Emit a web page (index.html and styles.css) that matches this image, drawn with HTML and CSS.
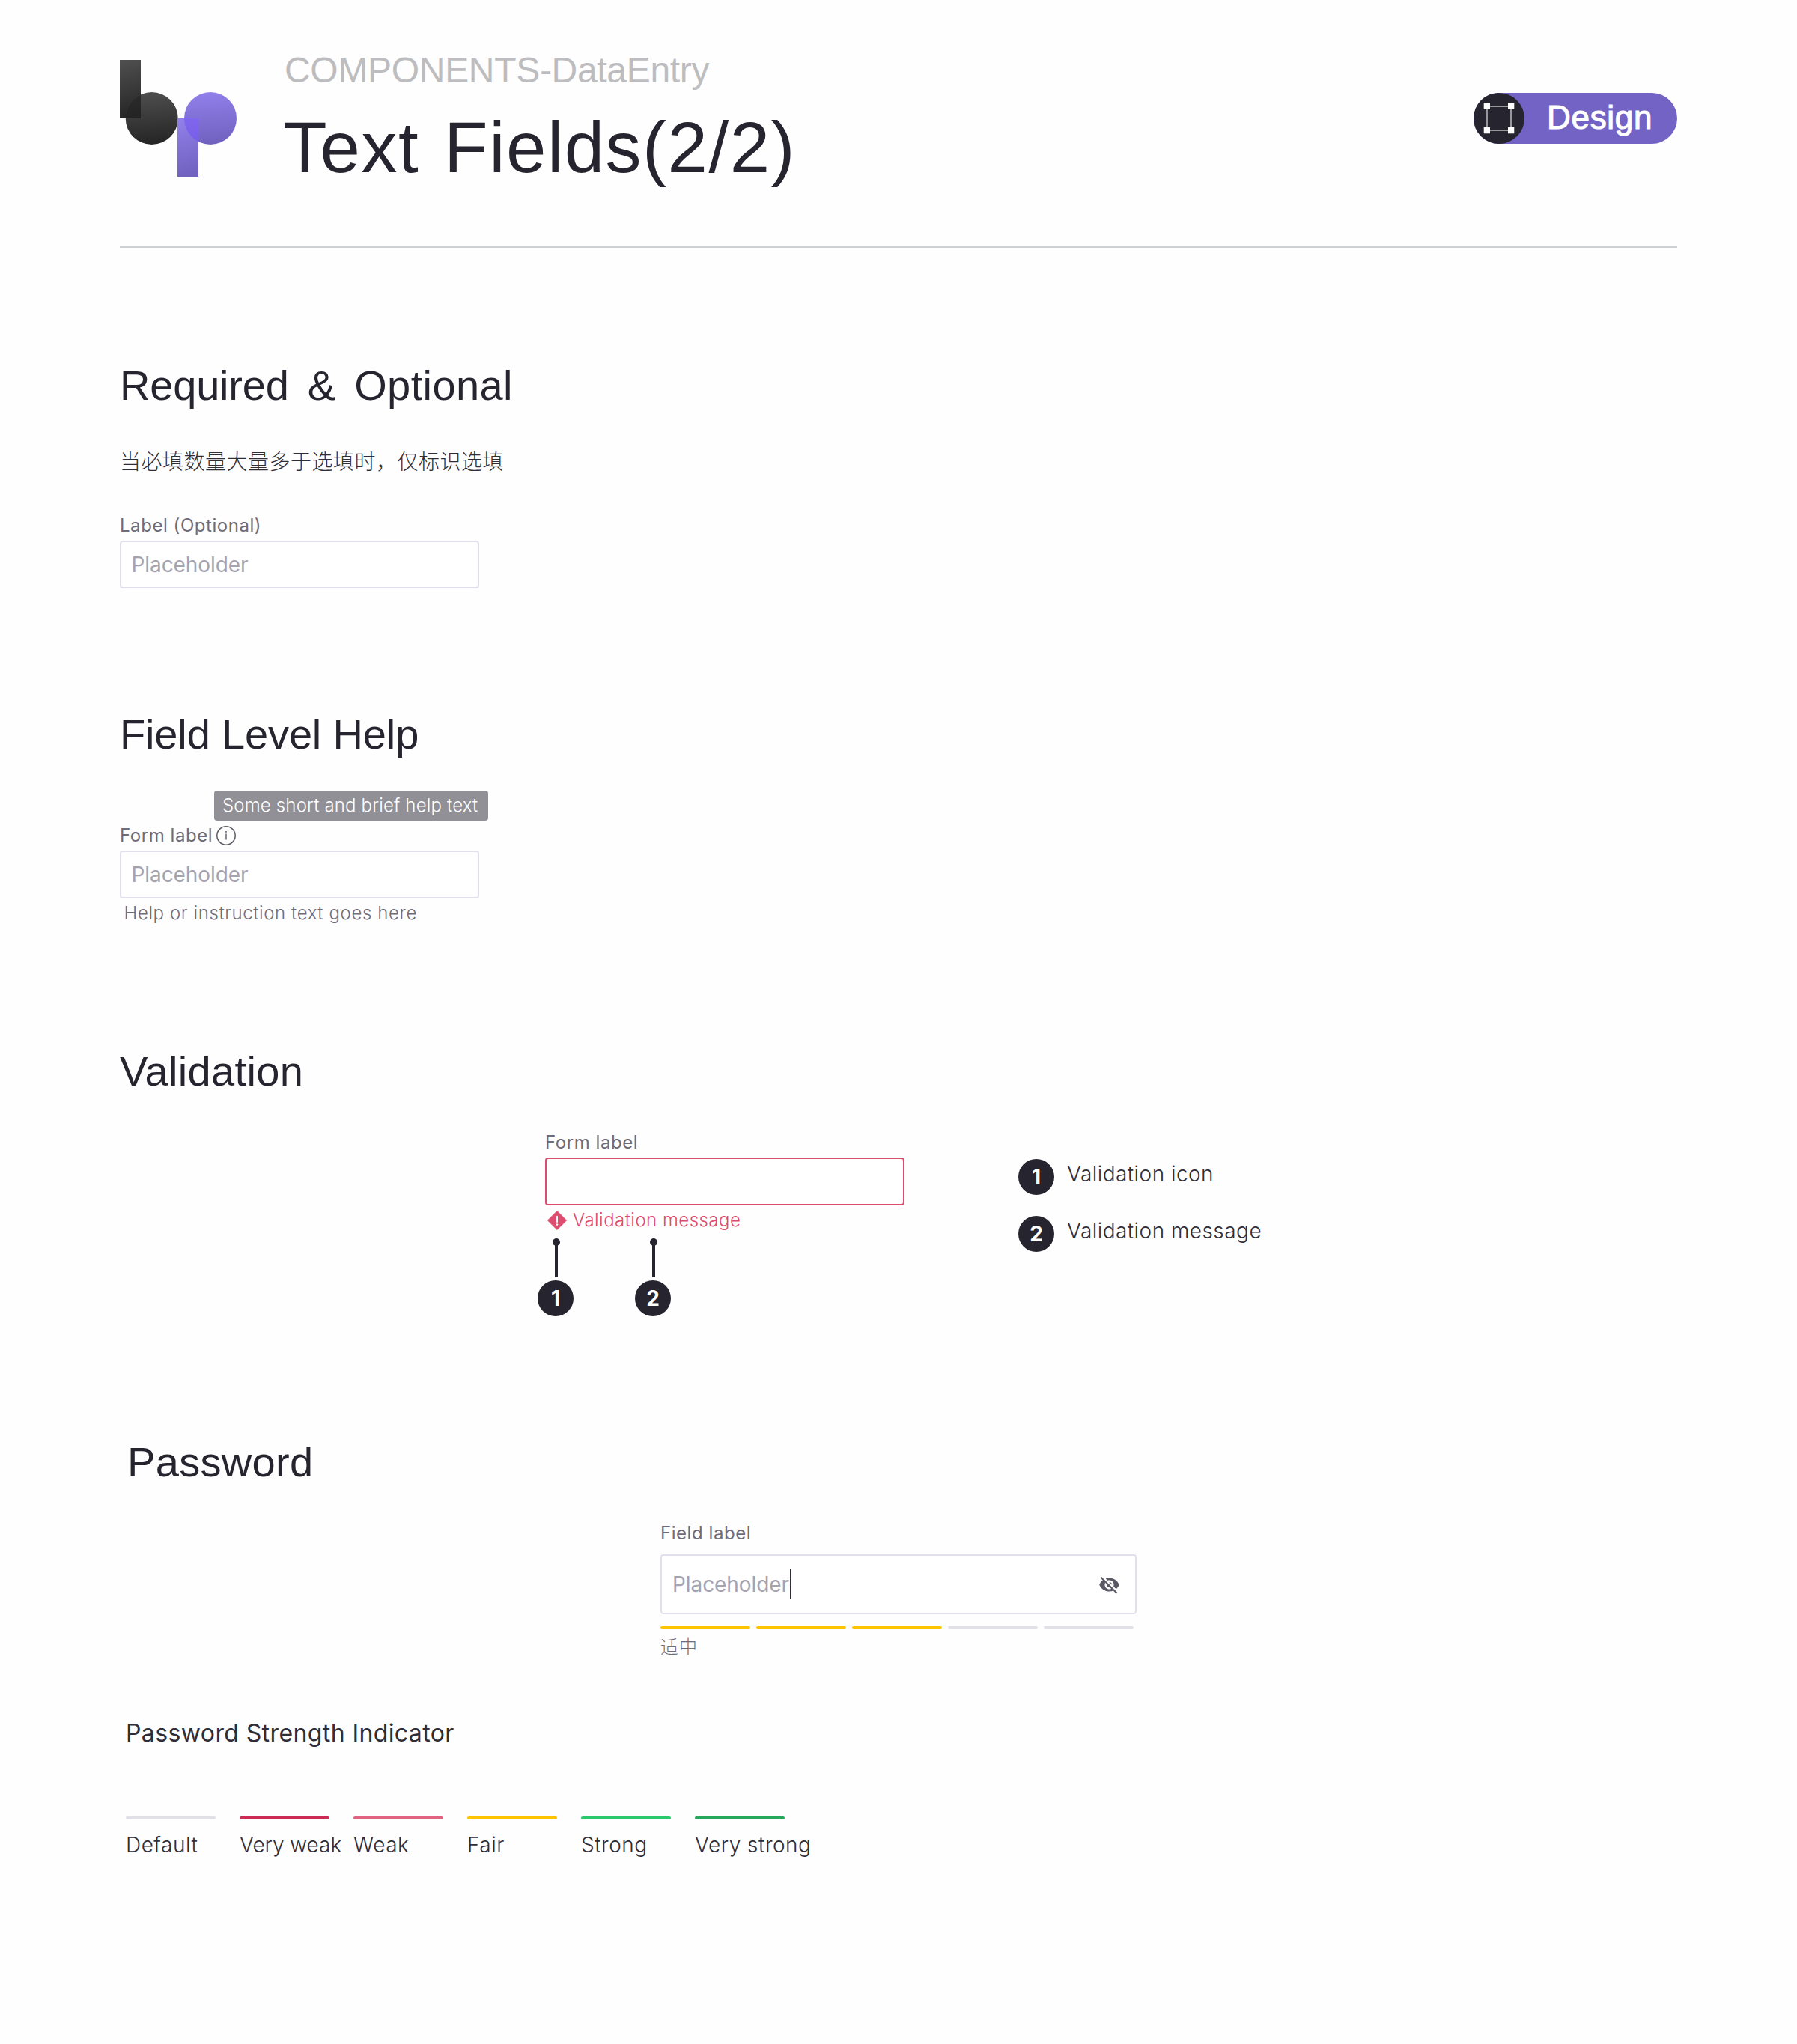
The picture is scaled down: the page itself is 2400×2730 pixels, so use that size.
FILE: index.html
```html
<!DOCTYPE html>
<html lang="zh-CN">
<head>
<meta charset="utf-8">
<title>Text Fields(2/2)</title>
<link rel="stylesheet" href="styles.css">
</head>
<body>
<header class="header">
  <svg class="logo" width="156" height="156" viewBox="0 0 156 156" aria-hidden="true">
    <defs>
      <linearGradient id="dark" x1="0" y1="0" x2="0.1" y2="1"><stop offset="0" stop-color="#505050"/><stop offset="1" stop-color="#262626"/></linearGradient>
      <linearGradient id="violet" x1="0" y1="0" x2="0.1" y2="1"><stop offset="0" stop-color="#9281ec"/><stop offset="1" stop-color="#7162c0"/></linearGradient>
      <linearGradient id="darkOver" x1="0" y1="0" x2="0.1" y2="1"><stop offset="0" stop-color="#2c2c2c"/><stop offset="1" stop-color="#1b1b1b"/></linearGradient>
      <linearGradient id="violetOver" x1="0" y1="0" x2="0" y2="1"><stop offset="0" stop-color="#8870f4"/><stop offset="1" stop-color="#775de6"/></linearGradient>
      <clipPath id="stemB"><rect width="28" height="78"/></clipPath>
      <clipPath id="stemP"><rect x="77" y="78" width="28" height="78"/></clipPath>
    </defs>
    <rect width="28" height="78" fill="url(#dark)"/>
    <circle cx="42.7" cy="78" r="35" fill="url(#dark)"/>
    <circle cx="42.7" cy="78" r="35" fill="url(#darkOver)" clip-path="url(#stemB)"/>
    <circle cx="121" cy="78" r="35" fill="url(#violet)"/>
    <rect x="77" y="78" width="28" height="78" fill="url(#violet)"/>
    <circle cx="121" cy="78" r="35" fill="url(#violetOver)" clip-path="url(#stemP)"/>
  </svg>
  <div class="titles">
    <div class="crumb">COMPONENTS-DataEntry</div>
    <h1 class="title">Text Fields(2/2)</h1>
  </div>
  <div class="pill">
    <svg width="68" height="68" viewBox="0 0 68 68" aria-hidden="true">
      <circle cx="34" cy="34" r="34" fill="#26242e"/>
      <rect x="18" y="18" width="32" height="32" fill="none" stroke="#d6d6d8" stroke-width="1.3"/>
      <path d="M13.7 13.5h8.3v8.3h-8.3zM46 13.5h8.3v8.3H46zM13.7 46h8.3v8.3h-8.3zM46 46h8.3v8.3H46z" fill="#fff"/>
    </svg>
    <span class="pill-text">Design</span>
  </div>
</header>

<section class="section required">
  <h2 class="heading heading-wide">Required &amp; <span class="loose">Optional</span></h2>
  <p class="note">当必填数量大量多于选填时，仅标识选填</p>
  <div class="label">Label (Optional)</div>
  <div class="input">Placeholder</div>
</section>

<section class="section help">
  <h2 class="heading">Field Level Help</h2>
  <div class="tooltip">Some short and brief help text</div>
  <div class="label label-row">Form label
    <svg width="26" height="26" viewBox="0 0 26 26" aria-hidden="true">
      <circle cx="13" cy="13" r="12.2" fill="none" stroke="#5d5a66" stroke-width="1.5"/>
      <path d="M12.3 10.5h1.4v8h-1.4zM12.2 7h1.6v1.7h-1.6z" fill="#5d5a66"/>
    </svg>
  </div>
  <div class="input">Placeholder</div>
  <div class="hint">Help or instruction text goes here</div>
</section>

<section class="section validation">
  <h2 class="heading heading-loose">Validation</h2>
  <div class="validation-body">
    <div class="invalid-field">
      <div class="label">Form label</div>
      <div class="input input-error"></div>
      <div class="message">
        <svg width="26" height="26" viewBox="0 0 26 26" aria-hidden="true">
          <path d="M13 .4 25.6 13 13 25.6.4 13z" fill="#dd4b6e" stroke="#dd4b6e" stroke-width=".8" stroke-linejoin="round"/>
          <path d="M13 7.8v7.2" stroke="#fff" stroke-width="2" stroke-linecap="round"/><circle cx="13" cy="18.6" r="1.3" fill="#fff"/>
        </svg>
        <span>Validation message</span>
      </div>
      <div class="pins">
        <div class="pin"><i class="pin-dot"></i><i class="pin-line"></i><b class="number">1</b></div>
        <div class="pin"><i class="pin-dot"></i><i class="pin-line"></i><b class="number">2</b></div>
      </div>
    </div>
    <div class="legend">
      <div class="legend-item"><b class="number">1</b><span>Validation icon</span></div>
      <div class="legend-item"><b class="number">2</b><span>Validation message</span></div>
    </div>
  </div>
</section>

<section class="section password">
  <h2 class="heading heading-loose">Password</h2>
  <div class="password-field">
    <div class="label">Field label</div>
    <div class="input input-tall">
      <span class="typed">Placeholder</span><i class="caret"></i>
      <svg class="eye" width="29" height="29" viewBox="0 0 24 24" aria-hidden="true">
        <path fill="#5b5865" d="M12 7c2.76 0 5 2.24 5 5 0 .65-.13 1.26-.36 1.83l2.92 2.92c1.51-1.26 2.7-2.89 3.43-4.75-1.73-4.39-6-7.5-11-7.5-1.4 0-2.74.25-3.98.7l2.16 2.16C10.74 7.13 11.35 7 12 7zM2 4.27l2.28 2.28.46.46C3.08 8.3 1.78 10.02 1 12c1.73 4.39 6 7.5 11 7.5 1.55 0 3.03-.3 4.38-.84l.42.42L19.73 22 21 20.73 3.27 3 2 4.27zM7.53 9.8l1.55 1.55c-.05.21-.08.43-.08.65 0 1.66 1.34 3 3 3 .22 0 .44-.03.65-.08l1.55 1.55c-.67.33-1.41.53-2.2.53-2.76 0-5-2.24-5-5 0-.79.2-1.53.53-2.2zm4.31-.78l3.15 3.15.02-.16c0-1.66-1.34-3-3-3l-.17.01z"/>
      </svg>
    </div>
    <div class="meter">
      <i class="bar fair"></i><i class="bar fair"></i><i class="bar fair"></i><i class="bar"></i><i class="bar"></i>
    </div>
    <div class="strength">适中</div>
  </div>
  <h3 class="subheading">Password Strength Indicator</h3>
  <div class="scale">
    <div class="level"><i class="bar"></i><span>Default</span></div>
    <div class="level"><i class="bar very-weak"></i><span class="tight">Very weak</span></div>
    <div class="level"><i class="bar weak"></i><span>Weak</span></div>
    <div class="level"><i class="bar fair"></i><span>Fair</span></div>
    <div class="level"><i class="bar strong"></i><span>Strong</span></div>
    <div class="level"><i class="bar very-strong"></i><span>Very strong</span></div>
  </div>
</section>
</body>
</html>
```
FILE: styles.css
```css
* { box-sizing: border-box; }

body {
  margin: 0;
  min-height: 2730px;
  padding: 0 160px;
  background: #fefefe;
  color: #26242e;
  font-family: Inter, "Noto Sans CJK SC", sans-serif;
}

h1, h2, h3, p { margin: 0; font-weight: 400; }
i { display: block; }
svg { display: block; flex: none; }

/* Header */
.header {
  display: flex;
  align-items: flex-start;
  height: 331px;
  border-bottom: 2px solid #cdd1d6;
}
.logo { margin-top: 80px; }
.titles {
  margin: 67px 0 0 62px;
  font-family: "Liberation Sans", Arial, sans-serif;
}
.crumb {
  padding-left: 2px;
  font-size: 48px;
  line-height: 53px;
  letter-spacing: -0.31px;
  color: #bdbdbf;
}
.title {
  margin-top: 23px;
  font-size: 96px;
  line-height: 107px;
  letter-spacing: 1.5px;
  word-spacing: 4.8px;
}
.pill {
  display: flex;
  width: 272px;
  height: 68px;
  margin: 124px 0 0 auto;
  border-radius: 34px;
  background: #7263c4;
}
.pill-text {
  margin: 8px 0 0 30px;
  font: 44px/49px "Liberation Sans", Arial, sans-serif;
  letter-spacing: 0.7px;
  color: #fff;
  -webkit-text-stroke: 1.1px #fff;
}

/* Sections */
.required { padding-top: 152px; }
.help { padding-top: 163px; }
.validation { padding-top: 165px; }
.password { padding: 163px 0 0 8px; }

.heading {
  font: 400 56px/63px "Liberation Sans", Arial, sans-serif;
  letter-spacing: -0.15px;
}
.heading-wide { letter-spacing: -0.2px; word-spacing: 9.8px; }
.heading-wide .loose { letter-spacing: 0.4px; }
.heading-loose { letter-spacing: 0.33px; }
.password .heading { padding-left: 2px; }

.note {
  margin: 54px 0 53px;
  font-size: 28px;
  line-height: 34px;
  font-weight: 300;
  letter-spacing: 0.5px;
  color: #2f2d38;
}

/* Fields */
.label {
  font-size: 24px;
  line-height: 29px;
  letter-spacing: 0.55px;
  color: #6f6c79;
}
.label-row { display: flex; align-items: center; gap: 5px; margin-top: 5px; }
.input {
  display: flex;
  align-items: center;
  width: 480px;
  height: 64px;
  margin-top: 6px;
  padding: 0 13.5px;
  border: 2px solid #e1dfec;
  border-radius: 4px;
  background: #fff;
  font-size: 28px;
  line-height: 34px;
  letter-spacing: -0.08px;
  color: #a5a3af;
}
.tooltip {
  width: 366px;
  height: 40px;
  margin: 44px 0 0 126px;
  padding: 5px 0 0 11px;
  border-radius: 4px;
  background: #919096;
  font-size: 24px;
  line-height: 29px;
  font-weight: 300;
  letter-spacing: 0.16px;
  white-space: nowrap;
  color: #fff;
}
.hint {
  margin-top: 5px;
  padding-left: 5.5px;
  font-size: 24px;
  line-height: 29px;
  font-weight: 300;
  letter-spacing: 0.61px;
  color: #6f6c79;
}

/* Validation */
.validation-body { display: flex; padding-left: 568px; margin-top: 49px; }
.invalid-field { width: 480px; }
.input-error { border-color: #dd4b6e; }
.message {
  display: flex;
  align-items: center;
  gap: 8px;
  margin-top: 5px;
  padding-left: 3px;
  font-size: 24px;
  line-height: 29px;
  font-weight: 300;
  letter-spacing: 0.46px;
  color: #dd4b6e;
}
.pins { display: flex; gap: 82px; margin: 10px 0 0 -10px; }
.pin { display: flex; flex-direction: column; align-items: center; }
.pin-dot {
  width: 10px;
  height: 10px;
  margin-left: 2px;
  border-radius: 50%;
  background: #26242e;
}
.pin-line { width: 4px; height: 43px; margin: -1px 0 4px 2px; background: #26242e; }
.number {
  width: 48px;
  height: 48px;
  border-radius: 50%;
  background: #26242e;
  font-size: 28px;
  line-height: 48px;
  font-weight: 700;
  text-align: center;
  color: #fff;
}
.legend { margin: 37px 0 0 152px; }
.legend-item {
  display: flex;
  gap: 17px;
  height: 76px;
  font-size: 28px;
  line-height: 34px;
  font-weight: 300;
  letter-spacing: 0.45px;
  color: #2f2d38;
}
.legend-item span { margin-top: 3px; }
.legend-item .number { letter-spacing: 0; }

/* Password */
.password-field { width: 636px; margin: 49px 0 0 714px; }
.input-tall { width: 636px; height: 80px; margin-top: 14px; padding: 0 20px 0 14px; }
.caret { width: 2px; height: 40px; margin-left: 1px; background: #2f2d38; }
.eye { margin-left: auto; }
.meter { display: flex; gap: 8px; margin-top: 16px; }
.bar { width: 120px; height: 4px; border-radius: 2px; background: #e0e0e6; }
.strength {
  margin-top: 9px;
  font-size: 24px;
  line-height: 29px;
  font-weight: 300;
  letter-spacing: 1px;
  color: #6f6c79;
}
.subheading {
  margin-top: 81px;
  font-size: 32px;
  line-height: 39px;
  letter-spacing: 0.4px;
  color: #2f2d38;
}
.scale { display: flex; gap: 32px; margin-top: 92px; }
.level {
  width: 120px;
  font-size: 28px;
  line-height: 34px;
  font-weight: 300;
  letter-spacing: 0.5px;
  white-space: nowrap;
  color: #2f2d38;
}
.level span { display: block; margin-top: 17px; }
.level .tight { letter-spacing: -0.05px; }

.very-weak { background: #cc2a55; }
.weak { background: #e06482; }
.fair { background: #ffc400; }
.strong { background: #2ac96d; }
.very-strong { background: #25a75c; }
```
